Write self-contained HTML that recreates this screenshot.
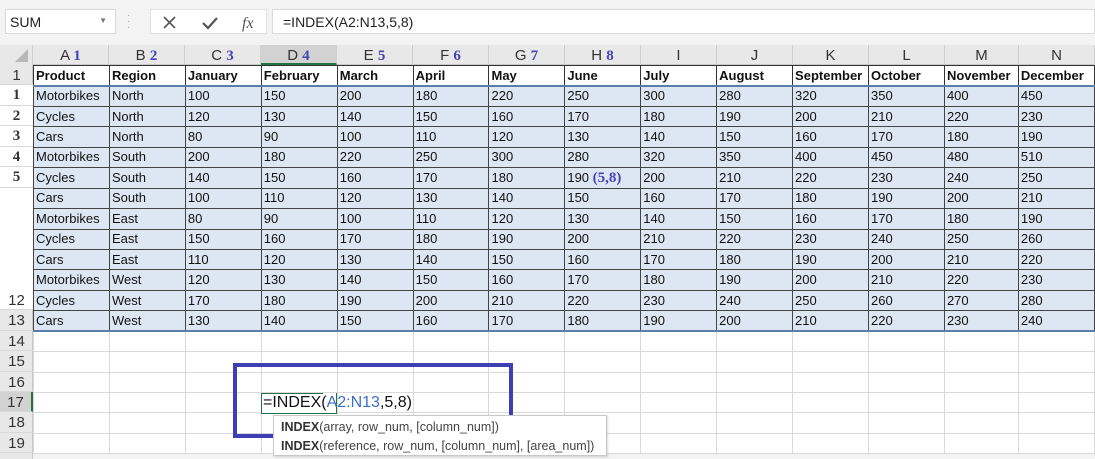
<!DOCTYPE html>
<html><head><meta charset="utf-8">
<style>
*{margin:0;padding:0;box-sizing:border-box}
body{width:1095px;height:459px;overflow:hidden;background:#f3f3f3;font-family:"Liberation Sans",Arial,sans-serif;position:relative}
.abs{position:absolute}
#nb{left:5px;top:9px;width:111px;height:25px;background:#fff;border:1px solid #dadada;font-size:14px;padding:4px 0 0 4px;color:#222}
#nb span{position:absolute;right:8px;top:6px;font-size:8px;color:#777}
#btns{left:150px;top:9px;width:117px;height:25px;background:#fff;border:1px solid #e2e2e2}
#fb{left:272px;top:9px;width:823px;height:25px;background:#fff;border:1px solid #dadada;font-size:14px;padding:4px 0 0 10px;color:#222}
#colh{left:0;top:45px;height:20px;width:1095px;background:#e8e8e8;border-bottom:1px solid #c8c8c8}
.ch{position:absolute;top:0;height:20px;font-size:15px;color:#333;text-align:center;line-height:21px;border-right:1px solid #cfcfcf}
.an{font-family:"Liberation Serif",serif;color:#4444b8;font-weight:bold;font-size:15px}
#rowh{left:0;top:65px;width:33px;height:394px;background:#e8e8e8;border-right:1px solid #c8c8c8}
.rh{position:absolute;left:0;width:33px;height:20.44px;font-size:15px;color:#333;text-align:center;line-height:21px;border-bottom:1px solid #d8d8d8}
table{position:absolute;left:33px;top:65px;border-collapse:collapse;table-layout:fixed;background:#fff}
td{height:20.44px;border:1px solid #d9d9d9;font-size:13px;padding:0 0 0 2px;color:#111;white-space:nowrap;overflow:hidden;line-height:18px}
tr.h td{font-weight:bold;border:1px solid #333}
tr.d td{background:#dde7f3;border:1px solid #444}
</style></head><body>
<div id="nb" class="abs">SUM<span>▼</span></div>
<div class="abs" style="left:127px;top:13px;color:#aaa;font-size:10px;line-height:6px">·<br>·<br>·</div>
<div id="btns" class="abs">
<svg width="117" height="25"><path d="M13 7 L24 18 M24 7 L13 18" stroke="#555" stroke-width="1.6"/><path d="M52 13 L57 18 L66 8" stroke="#555" stroke-width="2.2" fill="none"/><text x="91" y="18" font-family="Liberation Serif" font-style="italic" font-size="16" fill="#555">fx</text></svg>
</div>
<div id="fb" class="abs">=INDEX(A2:N13,5,8)</div>

<div id="colh" class="abs">
<div class="ch" style="left:0;width:33px;background:#e8e8e8"><svg width="33" height="20"><path d="M28 4 L28 17 L15 17 Z" fill="#b8b8b8"/></svg></div>
<div class="ch" style="left:33px;width:76px">A <span class="an">1</span></div>
<div class="ch" style="left:109px;width:76px">B <span class="an">2</span></div>
<div class="ch" style="left:185px;width:76px">C <span class="an">3</span></div>
<div class="ch" style="left:261px;width:76px;background:#d2d2d2;border-bottom:2px solid #217346">D <span class="an">4</span></div>
<div class="ch" style="left:337px;width:76px">E <span class="an">5</span></div>
<div class="ch" style="left:413px;width:76px">F <span class="an">6</span></div>
<div class="ch" style="left:489px;width:76px">G <span class="an">7</span></div>
<div class="ch" style="left:565px;width:76px">H <span class="an">8</span></div>
<div class="ch" style="left:641px;width:76px">I</div>
<div class="ch" style="left:717px;width:76px">J</div>
<div class="ch" style="left:793px;width:76px">K</div>
<div class="ch" style="left:869px;width:76px">L</div>
<div class="ch" style="left:945px;width:74px">M</div>
<div class="ch" style="left:1019px;width:76px">N</div>
</div>

<div id="rowh" class="abs">
<div class="rh" style="top:0">1</div>
<div class="rh an" style="top:20.44px;background:#fff">1</div>
<div class="rh an" style="top:40.88px;background:#fff">2</div>
<div class="rh an" style="top:61.32px;background:#fff">3</div>
<div class="rh an" style="top:81.76px;background:#fff">4</div>
<div class="rh an" style="top:102.2px;background:#fff">5</div>
<div class="rh" style="top:122.64px;background:#fff;height:122.64px;border:0"></div>
<div class="rh" style="top:224.84px">12</div>
<div class="rh" style="top:245.28px">13</div>
<div class="rh" style="top:265.72px">14</div>
<div class="rh" style="top:286.16px">15</div>
<div class="rh" style="top:306.6px">16</div>
<div class="rh" style="top:327.04px;background:#d2d2d2;border-right:2px solid #217346">17</div>
<div class="rh" style="top:347.48px">18</div>
<div class="rh" style="top:367.92px">19</div>
</div>

<table>
<colgroup><col style="width:76px"><col style="width:76px"><col style="width:76px"><col style="width:76px"><col style="width:76px"><col style="width:76px"><col style="width:76px"><col style="width:76px"><col style="width:76px"><col style="width:76px"><col style="width:76px"><col style="width:76px"><col style="width:74px"><col style="width:76px"></colgroup>
<tr class="h"><td>Product</td><td>Region</td><td>January</td><td>February</td><td>March</td><td>April</td><td>May</td><td>June</td><td>July</td><td>August</td><td>September</td><td>October</td><td>November</td><td>December</td></tr>
<tr class="d"><td>Motorbikes</td><td>North</td><td>100</td><td>150</td><td>200</td><td>180</td><td>220</td><td>250</td><td>300</td><td>280</td><td>320</td><td>350</td><td>400</td><td>450</td></tr>
<tr class="d"><td>Cycles</td><td>North</td><td>120</td><td>130</td><td>140</td><td>150</td><td>160</td><td>170</td><td>180</td><td>190</td><td>200</td><td>210</td><td>220</td><td>230</td></tr>
<tr class="d"><td>Cars</td><td>North</td><td>80</td><td>90</td><td>100</td><td>110</td><td>120</td><td>130</td><td>140</td><td>150</td><td>160</td><td>170</td><td>180</td><td>190</td></tr>
<tr class="d"><td>Motorbikes</td><td>South</td><td>200</td><td>180</td><td>220</td><td>250</td><td>300</td><td>280</td><td>320</td><td>350</td><td>400</td><td>450</td><td>480</td><td>510</td></tr>
<tr class="d"><td>Cycles</td><td>South</td><td>140</td><td>150</td><td>160</td><td>170</td><td>180</td><td>190 <span class="an">(5,8)</span></td><td>200</td><td>210</td><td>220</td><td>230</td><td>240</td><td>250</td></tr>
<tr class="d"><td>Cars</td><td>South</td><td>100</td><td>110</td><td>120</td><td>130</td><td>140</td><td>150</td><td>160</td><td>170</td><td>180</td><td>190</td><td>200</td><td>210</td></tr>
<tr class="d"><td>Motorbikes</td><td>East</td><td>80</td><td>90</td><td>100</td><td>110</td><td>120</td><td>130</td><td>140</td><td>150</td><td>160</td><td>170</td><td>180</td><td>190</td></tr>
<tr class="d"><td>Cycles</td><td>East</td><td>150</td><td>160</td><td>170</td><td>180</td><td>190</td><td>200</td><td>210</td><td>220</td><td>230</td><td>240</td><td>250</td><td>260</td></tr>
<tr class="d"><td>Cars</td><td>East</td><td>110</td><td>120</td><td>130</td><td>140</td><td>150</td><td>160</td><td>170</td><td>180</td><td>190</td><td>200</td><td>210</td><td>220</td></tr>
<tr class="d"><td>Motorbikes</td><td>West</td><td>120</td><td>130</td><td>140</td><td>150</td><td>160</td><td>170</td><td>180</td><td>190</td><td>200</td><td>210</td><td>220</td><td>230</td></tr>
<tr class="d"><td>Cycles</td><td>West</td><td>170</td><td>180</td><td>190</td><td>200</td><td>210</td><td>220</td><td>230</td><td>240</td><td>250</td><td>260</td><td>270</td><td>280</td></tr>
<tr class="d"><td>Cars</td><td>West</td><td>130</td><td>140</td><td>150</td><td>160</td><td>170</td><td>180</td><td>190</td><td>200</td><td>210</td><td>220</td><td>230</td><td>240</td></tr>
<tr><td></td><td></td><td></td><td></td><td></td><td></td><td></td><td></td><td></td><td></td><td></td><td></td><td></td><td></td></tr>
<tr><td></td><td></td><td></td><td></td><td></td><td></td><td></td><td></td><td></td><td></td><td></td><td></td><td></td><td></td></tr>
<tr><td></td><td></td><td></td><td></td><td></td><td></td><td></td><td></td><td></td><td></td><td></td><td></td><td></td><td></td></tr>
<tr><td></td><td></td><td></td><td></td><td></td><td></td><td></td><td></td><td></td><td></td><td></td><td></td><td></td><td></td></tr>
<tr><td></td><td></td><td></td><td></td><td></td><td></td><td></td><td></td><td></td><td></td><td></td><td></td><td></td><td></td></tr>
<tr><td></td><td></td><td></td><td></td><td></td><td></td><td></td><td></td><td></td><td></td><td></td><td></td><td></td><td></td></tr>
</table>

<div class="abs" style="left:33px;top:85px;width:1062px;height:2px;background:#5a7ea8"></div>
<div class="abs" style="left:33px;top:330px;width:1062px;height:2px;background:#5a7ea8"></div>

<div class="abs" style="left:261px;top:393px;width:63px;height:21px;border:1px solid #217346;background:#fff"></div>
<div class="abs" style="left:323px;top:393px;width:14px;height:21px;border-right:1px solid #217346;border-bottom:1px solid #217346;background:#fff"></div>
<div class="abs" style="left:263px;top:394px;font-size:16px;color:#111;white-space:nowrap">=INDEX(<span style="color:#3a6fc4">A2:N13</span>,5,8)</div>

<div class="abs" style="left:233px;top:363px;width:280px;height:75px;border:4px solid #3f3fb4"></div>

<div class="abs" style="left:273px;top:415px;width:334px;height:41px;background:#fff;border:1px solid #c8c8c8;box-shadow:1px 1px 2px rgba(0,0,0,.15);font-size:12.5px;color:#444;padding:2px 0 0 7px;line-height:19px;white-space:nowrap">
<div><b style="color:#333">INDEX</b>(array, row_num, [column_num])</div>
<div><b style="color:#333">INDEX</b>(reference, row_num, [column_num], [area_num])</div>
</div>
</body></html>
